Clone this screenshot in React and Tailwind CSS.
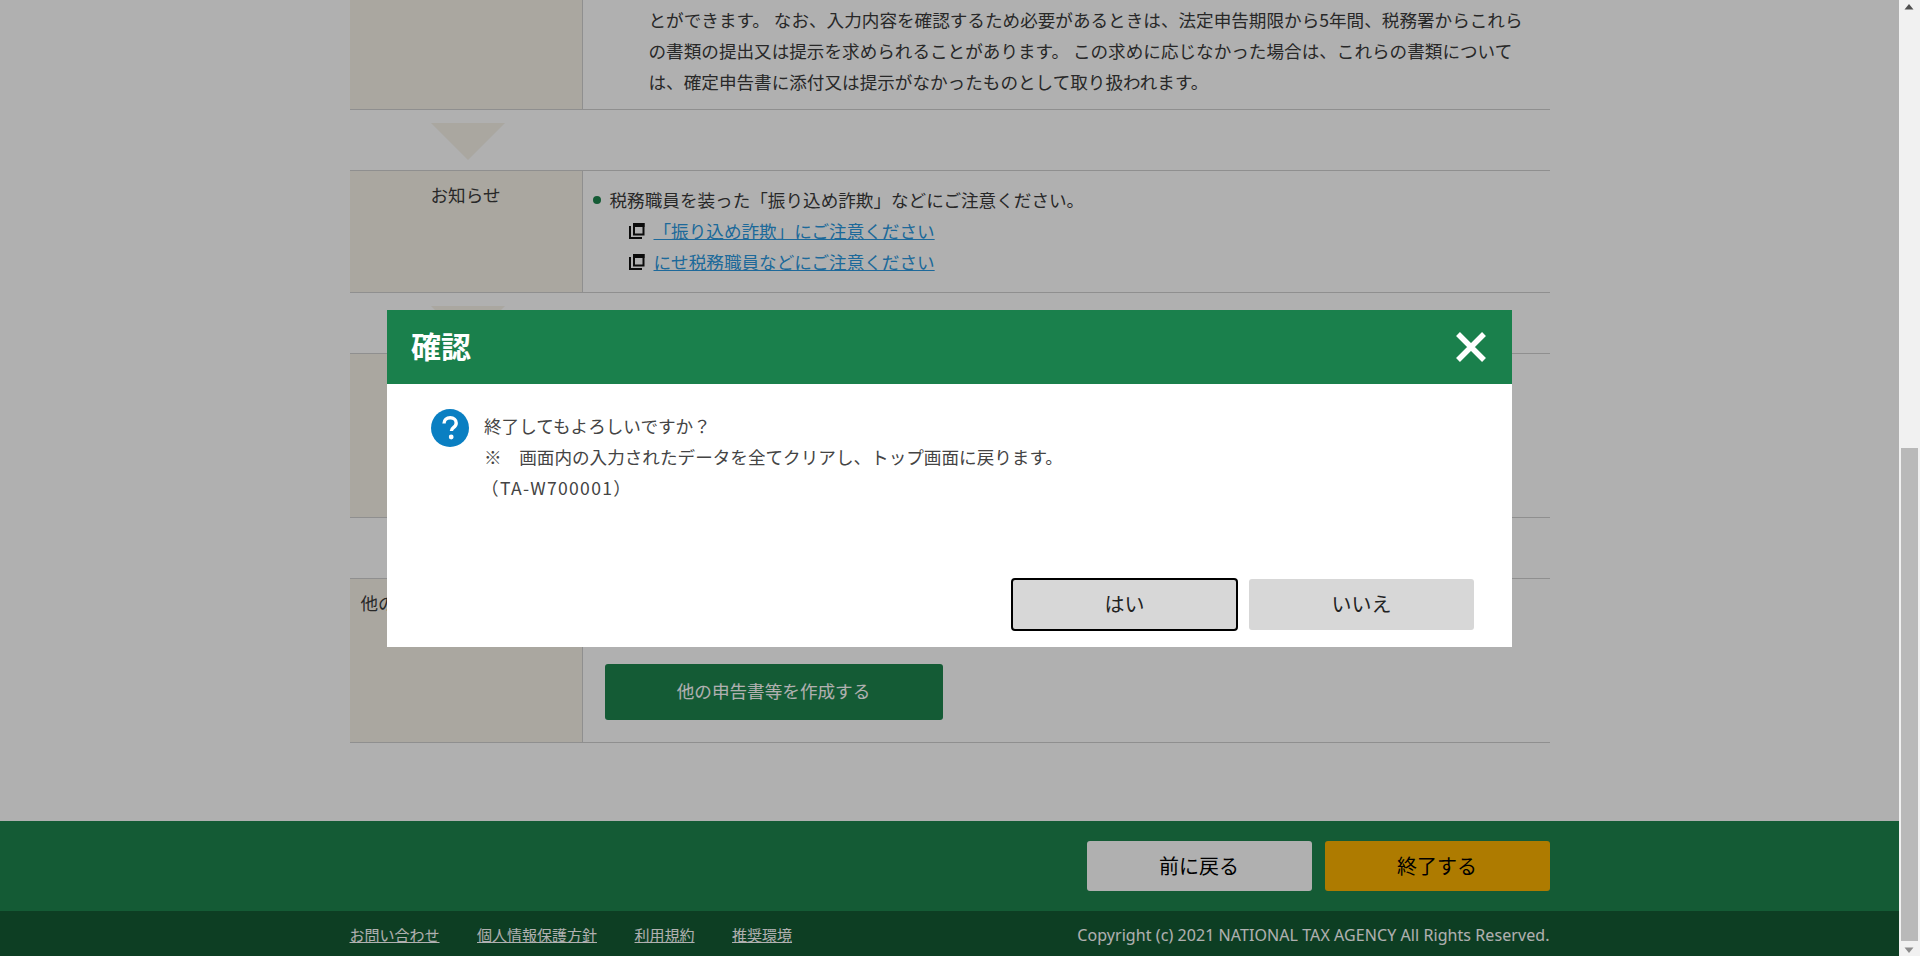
import React from "react";

const Arrow = () => (
  <div className="h-[60px] pt-[13px] pl-[81px]">
    <div className="w-0 h-0 border-l-[37px] border-r-[37px] border-t-[37px] border-l-transparent border-r-transparent border-t-[#f6f2e8]" />
  </div>
);

const CopyIcon = () => (
  <svg width="16" height="16" viewBox="0 0 16 16" className="shrink-0 text-[#111]">
    <path d="M1 3v12h12" fill="none" stroke="currentColor" strokeWidth="2" />
    <rect x="5" y="1" width="9.5" height="10.5" fill="none" stroke="currentColor" strokeWidth="2" />
    <rect x="4" y="0" width="11.5" height="4" fill="currentColor" />
  </svg>
);

const Row = ({ h, label, labelClass, children, border }) => (
  <div className={`flex border-b border-[#d0d0d0] ${border ? "border-t" : ""} ${h}`}>
    <div className={`w-[232px] shrink-0 bg-[#f6f2e8] ${labelClass}`}>{label}</div>
    <div className="flex-1 border-l border-[#d0d0d0]">{children}</div>
  </div>
);

const FooterLink = ({ children }) => (
  <a className="underline text-[15px] leading-[24px] text-white">{children}</a>
);

export default function App() {
  return (
    <div className="flex h-screen overflow-hidden font-['Noto_Sans_CJK_JP','Liberation_Sans',sans-serif] text-[17.6px] leading-[31px] text-[#3a3a3a]">
      <div className="relative flex-1 flex flex-col bg-white min-w-0">
        <main className="flex-1 w-[1200px] mx-auto">
          <Row h="h-[110px]" labelClass="">
            <div className="h-full flex flex-col justify-end pb-[12px] pl-[66px] whitespace-nowrap">
              <p>
                とができます。 なお、入力内容を確認するため必要があるときは、法定申告期限から5年間、税務署からこれら
                <br />
                の書類の提出又は提示を求められることがあります。 この求めに応じなかった場合は、これらの書類について
                <br />
                は、確定申告書に添付又は提示がなかったものとして取り扱われます。
              </p>
            </div>
          </Row>
          <Arrow />
          <Row border h="h-[123px]" label="お知らせ" labelClass="text-center pt-[8px]">
            <div className="pt-[13px] pl-[10px]">
              <div className="flex items-center gap-[9px]">
                <span className="w-[8px] h-[8px] rounded-full bg-[#1e844e]" />
                <span>税務職員を装った「振り込め詐欺」などにご注意ください。</span>
              </div>
              <div className="flex items-center gap-[9px] pl-[36px]">
                <CopyIcon />
                <a className="underline text-[#2b98e0]">「振り込め詐欺」にご注意ください</a>
              </div>
              <div className="flex items-center gap-[9px] pl-[36px]">
                <CopyIcon />
                <a className="underline text-[#2b98e0]">にせ税務職員などにご注意ください</a>
              </div>
            </div>
          </Row>
          <Arrow />
          <Row border h="h-[165px]" labelClass="" />
          <Arrow />
          <Row border h="h-[165px]" label="他の申告書等" labelClass="pt-[8px] pl-[11px]">
            <div className="pt-[85px] pl-[22px]">
              <button className="w-[338px] h-[56px] pb-[3px] rounded-[3px] bg-[#1e844e] text-white">
                他の申告書等を作成する
              </button>
            </div>
          </Row>
        </main>

        <footer>
          <div className="h-[90px] bg-[#1e844e]">
            <div className="w-[1200px] mx-auto flex justify-end gap-[13px] pt-[20px]">
              <button className="w-[225px] h-[50px] pb-[2px] rounded-[3px] bg-white text-black text-[20px]">前に戻る</button>
              <button className="w-[225px] h-[50px] pb-[2px] rounded-[3px] bg-[#fdb300] text-black text-[20px]">終了する</button>
            </div>
          </div>
          <div className="h-[45px] bg-[#145a34]">
            <div className="w-[1200px] mx-auto h-full pt-[2px] flex items-center justify-between">
              <div className="flex gap-[37.5px]">
                <FooterLink>お問い合わせ</FooterLink>
                <FooterLink>個人情報保護方針</FooterLink>
                <FooterLink>利用規約</FooterLink>
                <FooterLink>推奨環境</FooterLink>
              </div>
              <span className="pt-[1px] text-[16px] tracking-[0.07px] leading-[24px] text-white font-['Noto_Sans','Noto_Sans_CJK_JP',sans-serif]">
                Copyright (c) 2021 NATIONAL TAX AGENCY All Rights Reserved.
              </span>
            </div>
          </div>
        </footer>

        <div className="absolute inset-0 bg-[rgba(0,0,0,0.31)] flex items-center justify-center">
          <div className="w-[1125px] h-[337px] bg-white flex flex-col">
            <div className="h-[74px] shrink-0 bg-[#1a804c] flex items-center justify-between pl-[24px] pr-[23px]">
              <h2 className="pb-[3px] text-[30px] font-bold text-white leading-none">確認</h2>
              <svg width="36" height="36" viewBox="0 0 36 36" className="mt-[1px]">
                <path d="M5 5l26 26M31 5L5 31" stroke="#fff" strokeWidth="5.5" fill="none" />
              </svg>
            </div>
            <div className="flex-1 flex flex-col pt-[25px] pl-[44px] pr-[38px] pb-[17px]">
              <div className="flex-1 flex gap-[15px]">
                <svg width="38" height="38" viewBox="0 0 38 38" className="shrink-0">
                  <circle cx="19" cy="19" r="19" fill="#0a7fc2" />
                  <path d="M13 14.5c0-3.6 2.7-5.7 6.2-5.7 3.6 0 6 2.1 6 5.1 0 2.3-1.2 3.5-2.8 4.7-1.5 1.1-2 1.8-2 3.4" fill="none" stroke="#fff" strokeWidth="3.4" />
                  <circle cx="20.2" cy="28" r="2.4" fill="#fff" />
                </svg>
                <div className="pt-[1px] text-[#444]">
                  <p>終了してもよろしいですか？</p>
                  <p>※　画面内の入力されたデータを全てクリアし、トップ画面に戻ります。</p>
                  <p className="-ml-[3px] tracking-[1.3px]">（TA-W700001）</p>
                </div>
              </div>
              <div className="flex justify-end gap-[12px]">
                <button className="w-[225px] h-[51px] pb-[2px] rounded-[3px] bg-[#d7d7d7] text-[#222] text-[20px] outline-2 outline-offset-[-1px] outline-black">はい</button>
                <button className="w-[225px] h-[51px] pb-[2px] rounded-[3px] bg-[#d7d7d7] text-[#222] text-[20px]">いいえ</button>
              </div>
            </div>
          </div>
        </div>
      </div>

      <div className="w-[21px] shrink-0 bg-[#f1f1f1] flex flex-col pl-[2px]">
        <svg width="17" height="17" viewBox="0 0 17 17" className="shrink-0">
          <path d="M3.5 9.5L8 4l4.5 5.5z" fill="#505050" />
        </svg>
        <div className="mt-auto h-[493px] w-[17px] bg-[#b9b9b9] shrink-0" />
        <svg width="17" height="15" viewBox="0 0 17 15" className="shrink-0">
          <path d="M3.5 6.5L8 12l4.5-5.5z" fill="#8c8c8c" />
        </svg>
      </div>
    </div>
  );
}
